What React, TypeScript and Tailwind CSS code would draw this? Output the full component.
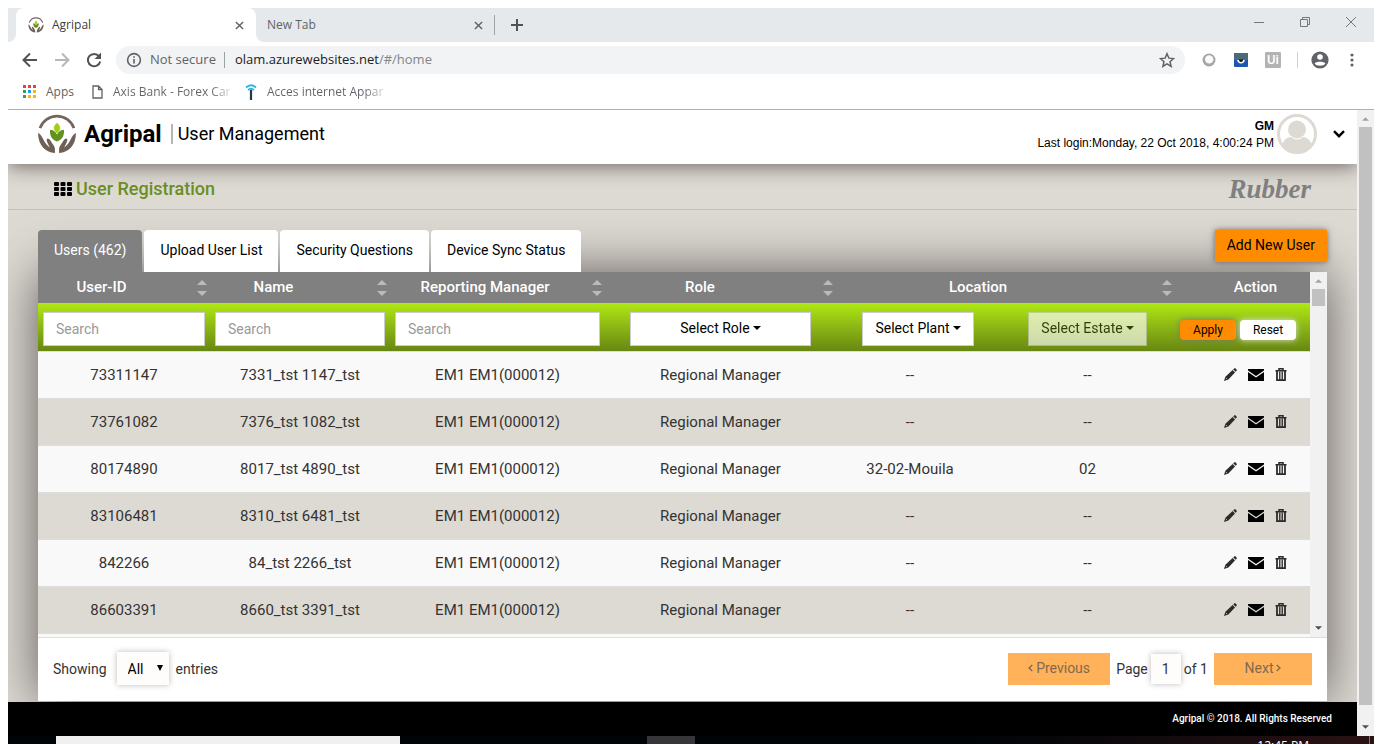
import React from "react";

const users = [
  ["73311147", "7331_tst 1147_tst", "EM1 EM1(000012)", "Regional Manager", "--", "--"],
  ["73761082", "7376_tst 1082_tst", "EM1 EM1(000012)", "Regional Manager", "--", "--"],
  ["80174890", "8017_tst 4890_tst", "EM1 EM1(000012)", "Regional Manager", "32-02-Mouila", "02"],
  ["83106481", "8310_tst 6481_tst", "EM1 EM1(000012)", "Regional Manager", "--", "--"],
  ["842266", "84_tst 2266_tst", "EM1 EM1(000012)", "Regional Manager", "--", "--"],
  ["86603391", "8660_tst 3391_tst", "EM1 EM1(000012)", "Regional Manager", "--", "--"],
];

function Logo({ className }: { className: string }) {
  return (
    <svg viewBox="0 0 110 116" className={className} aria-hidden="true">
      <path d="M6 41A52 52 0 0 1 104 41" fill="none" stroke="#74655d" strokeWidth="8" />
      <path
        d="M0 55C7 57 11 65 16 75C20 84 26 91 34 98C31 89 24 80 25 74C27 69 32 71 36 77C41 86 48 92 49 101V113C20 112 0 88 0 55Z"
        fill="#6e5f57"
      />
      <path
        d="M110 55C103 57 99 65 94 75C90 84 84 91 76 98C79 89 86 80 85 74C83 69 78 71 74 77C69 86 62 92 61 101V113C90 112 110 88 110 55Z"
        fill="#6e5f57"
      />
      <path d="M55 80C40 76 33 62 35 46C46 47 53 51 55 60C57 51 64 47 75 46C77 62 70 76 55 80Z" fill="#64901f" />
      <path d="M55 25C69 36 67 47 55 57C43 47 41 36 55 25Z" fill="#a0ce14" stroke="#fff" strokeWidth="1.5" />
    </svg>
  );
}

function Close({ className }: { className: string }) {
  return (
    <svg viewBox="0 0 10 10" className={className} fill="none" stroke="currentColor" aria-hidden="true">
      <path d="M1 1L9 9M9 1L1 9" strokeWidth="1.6" />
    </svg>
  );
}

function Triangle({ up, className }: { up?: boolean; className: string }) {
  return (
    <svg viewBox="0 0 8 4" className={className} fill="currentColor" aria-hidden="true">
      <path d={up ? "M0 4L4 0L8 4Z" : "M0 0H8L4 4Z"} />
    </svg>
  );
}

function Bookmark({ href, label }: { href: string; label: string }) {
  return (
    <a
      href={href}
      className="ml-[10px] w-[122px] whitespace-nowrap bg-linear-to-r from-[#5f6368] from-80% to-white bg-clip-text text-transparent"
    >
      {label}
    </a>
  );
}

function BrowserChrome() {
  return (
    <div className="shrink-0 border-b border-[#b0b0b2] font-['Open_Sans',sans-serif] text-xs text-[#5f6368]">
      <div className="flex h-[34px] bg-[#e5e9ec]">
        <div className="w-2 bg-white">
          <div className="h-full rounded-br-lg bg-[#e5e9ec]" />
        </div>
        <div className="flex w-60 items-center rounded-t-lg bg-white px-3 text-[#3c4043]">
          <Logo className="h-4 w-4" />
          <span className="ml-2 grow">Agripal</span>
          <button aria-label="Close Agripal" className="text-[#5f6368]">
            <Close className="h-[9px] w-[9px]" />
          </button>
        </div>
        <div className="bg-white">
          <div className="flex h-full w-[238px] items-center rounded-bl-lg bg-[#e5e9ec] pl-[11px] pr-[11px]">
            <span className="grow">New Tab</span>
            <button aria-label="Close New Tab">
              <Close className="h-[9px] w-[9px]" />
            </button>
          </div>
        </div>
        <div className="h-5 w-px self-center bg-[#a0a4a8]" />
        <button aria-label="New tab" className="ml-4">
          <svg viewBox="0 0 12 12" className="h-3 w-3" stroke="#4f5357" strokeWidth="2" aria-hidden="true">
            <path d="M6 0V12M0 6H12" />
          </svg>
        </button>
        <div className="ml-auto flex items-start gap-9 pr-[18px] pt-[9px] text-[#777]">
          <button aria-label="Minimize">
            <svg viewBox="0 0 10 10" className="h-[10px] w-[10px]" stroke="currentColor" aria-hidden="true">
              <path d="M0 5.5H10" />
            </svg>
          </button>
          <button aria-label="Restore">
            <svg viewBox="0 0 10 10" className="h-[10px] w-[10px]" fill="none" stroke="currentColor" aria-hidden="true">
              <path d="M0.5 2.5H7.5V9.5H0.5ZM2.5 2.5V0.5H9.5V7.5H7.5" />
            </svg>
          </button>
          <button aria-label="Close window">
            <svg viewBox="0 0 10 10" className="h-[10px] w-[10px]" stroke="currentColor" aria-hidden="true">
              <path d="M0 0L10 10M10 0L0 10" />
            </svg>
          </button>
        </div>
      </div>

      <div className="mt-1 flex h-7 items-center pl-[14px] pr-5">
        <button aria-label="Back">
          <svg viewBox="0 0 16 16" className="h-4 w-4" fill="none" stroke="#4f5357" strokeWidth="2" aria-hidden="true">
            <path d="M15 8H2M8 1.5L1.5 8L8 14.5" />
          </svg>
        </button>
        <button aria-label="Forward" className="ml-4">
          <svg viewBox="0 0 16 16" className="h-4 w-4" fill="none" stroke="#b5b7b9" strokeWidth="2" aria-hidden="true">
            <path d="M1 8H14M8 1.5L14.5 8L8 14.5" />
          </svg>
        </button>
        <button aria-label="Reload" className="ml-4">
          <svg viewBox="0 0 16 16" className="h-4 w-4" aria-hidden="true">
            <path d="M13 4.2A6.2 6.2 0 1 0 14.2 9.5" fill="none" stroke="#4f5357" strokeWidth="2" />
            <path d="M15 0.5V7H8.5Z" fill="#4f5357" />
          </svg>
        </button>
        <div className="ml-[14px] flex h-7 grow items-center rounded-full bg-[#f1f3f4] px-[10px] text-[13px]">
          <svg viewBox="0 0 16 16" className="h-4 w-4" fill="none" stroke="#5f6368" strokeWidth="1.6" aria-hidden="true">
            <circle cx="8" cy="8" r="6.4" />
            <path d="M8 7V11.5M8 4.2V5.8" />
          </svg>
          <span className="ml-2">Not secure</span>
          <span className="ml-2 h-4 w-px bg-[#9aa0a6]" />
          <span className="ml-[10px] text-[#80868b]">
            <span className="text-[#202124]">olam.azurewebsites.net</span>/#/home
          </span>
          <svg viewBox="0 0 24 24" className="ml-auto h-4 w-4" fill="none" stroke="#5f6368" strokeWidth="2.2" aria-hidden="true">
            <path d="M12 2.5L14.8 9.2L22 9.8L16.5 14.5L18.2 21.6L12 17.8L5.8 21.6L7.5 14.5L2 9.8L9.2 9.2Z" />
          </svg>
        </div>
        <div className="flex items-center pl-[17px]">
          <svg viewBox="0 0 14 14" className="h-[14px] w-[14px]" aria-hidden="true">
            <circle cx="7" cy="7" r="6.5" fill="#a5a5a5" />
            <circle cx="7.2" cy="6.4" r="4.2" fill="#fafafa" />
          </svg>
          <svg viewBox="0 0 14 14" className="ml-[18px] h-[14px] w-[14px]" aria-hidden="true">
            <rect width="14" height="14" rx="1" fill="#1f57b0" />
            <rect width="14" height="7" fill="#4b6b7c" />
            <path d="M3.2 7H10.8Q10.4 10.4 7 10.4T3.2 7Z" fill="#fff" />
            <path d="M4.8 6.5H9.2Q9 9 7 9T4.8 6.5Z" fill="#111" />
          </svg>
          <span className="ml-[17px] flex h-4 w-4 items-center justify-center rounded-[1px] bg-[#b3b3b3] font-['Roboto',sans-serif] text-[13px] font-medium text-white">
            Ui
          </span>
          <span className="ml-4 h-4 w-px bg-[#cfd1d3]" />
          <svg viewBox="0 0 18 18" className="ml-[13px] h-[18px] w-[18px]" aria-hidden="true">
            <circle cx="9" cy="9" r="8.6" fill="#5f6368" />
            <circle cx="9" cy="6" r="2.8" fill="#fff" />
            <path d="M3.6 12.6C4.8 10.2 13.2 10.2 14.4 12.6C12.5 15.6 5.5 15.6 3.6 12.6Z" fill="#fff" />
          </svg>
          <svg viewBox="0 0 4 14" className="ml-[21px] h-[14px] w-1" fill="#5f6368" aria-hidden="true">
            <circle cx="2" cy="2" r="1.6" />
            <circle cx="2" cy="7" r="1.6" />
            <circle cx="2" cy="12" r="1.6" />
          </svg>
        </div>
      </div>

      <div className="flex h-[35px] items-center pl-[15px]">
        <svg viewBox="0 0 13 13" className="h-[13px] w-[13px]" aria-hidden="true">
          <path d="M0 0H3V3H0ZM5 0H8V3H5ZM10 0H13V3H10Z" fill="#ea4335" />
          <path d="M0 5H3V8H0ZM0 10H3V13H0Z" fill="#2fa35b" />
          <path d="M5 5H8V8H5Z" fill="#2196f3" />
          <path d="M10 5H13V8H10ZM5 10H8V13H5ZM10 10H13V13H10Z" fill="#fbb40c" />
        </svg>
        <a href="#apps" className="ml-[10px]">Apps</a>
        <svg viewBox="0 0 11 14" className="ml-[18px] h-[14px] w-[11px]" fill="none" stroke="#5f6368" strokeWidth="1.3" aria-hidden="true">
          <path d="M1 1H6.5L10 4.5V13H1ZM6.5 1V4.5H10" />
        </svg>
        <Bookmark href="#axis" label="Axis Bank - Forex Car" />
        <svg viewBox="0 0 12 16" className="ml-[10px] h-4 w-3" fill="none" aria-hidden="true">
          <path d="M1 3.5Q6 -1 11 3.5M3 6Q6 3.4 9 6" stroke="#29b6e8" strokeWidth="1.8" />
          <path d="M6 6V16" stroke="#1f3a4a" strokeWidth="2.2" />
        </svg>
        <Bookmark href="#acces" label="Acces internet Appar" />
      </div>
    </div>
  );
}

function SiteHeader() {
  return (
    <header className="relative z-10 flex h-[54px] shrink-0 items-center bg-white pb-[6px] pl-[30px] pr-3 text-black shadow-[0_2px_20px_#6b6360]">
      <Logo className="h-10 w-[38px]" />
      <span className="ml-2 text-2xl font-bold">Agripal</span>
      <span className="ml-[9px] h-5 w-[2px] bg-[#b5b5b5]" />
      <h1 className="ml-[5px] text-lg">User Management</h1>
      <div className="ml-auto pt-[2px] text-right font-['Liberation_Sans',sans-serif] text-xs leading-[17px]">
        <div className="font-bold">GM</div>
        <div>Last login:Monday, 22 Oct 2018, 4:00:24 PM</div>
      </div>
      <svg viewBox="0 0 40 40" className="ml-[3px] h-10 w-10" aria-hidden="true">
        <circle cx="20" cy="20" r="18.5" fill="#fff" stroke="#dddad3" strokeWidth="3" />
        <circle cx="20" cy="15.5" r="9" fill="#dddad3" />
        <path d="M5 31C7 25 11 23 14 23Q20 28 26 23C29 23 33 25 35 31Q29 39 20 39T5 31Z" fill="#dddad3" />
      </svg>
      <button aria-label="Account menu" className="ml-4">
        <svg viewBox="0 0 12 8" className="h-2 w-3" fill="none" stroke="#000" strokeWidth="2.4" aria-hidden="true">
          <path d="M1 1.2L6 6.2L11 1.2" />
        </svg>
      </button>
    </header>
  );
}

function Sort() {
  return (
    <span className="absolute right-[3px] top-2 flex flex-col gap-[6px] text-[#bdb9b9]">
      <Triangle up className="h-[5px] w-[10px]" />
      <Triangle className="h-[5px] w-[10px]" />
    </span>
  );
}

function Filter({ label, className }: { label: string; className: string }) {
  return (
    <button className={"flex h-[34px] items-center justify-center gap-[3px] border border-[#ccc] bg-white pb-[2px] text-sm text-black " + className}>
      {label}
      <Triangle className="h-1 w-2" />
    </button>
  );
}

function Actions() {
  return (
    <div className="flex items-center justify-center pb-px pl-[26px] text-[#2b2b2b]">
      <button aria-label="Edit">
        <svg viewBox="0 0 13 13" className="h-[13px] w-[13px]" fill="currentColor" aria-hidden="true">
          <path d="M9.2 1.4L10.2 0.4Q10.9 -0.2 11.6 0.5L12.5 1.4Q13.2 2.1 12.6 2.8L11.6 3.8Z" />
          <path d="M8.6 2L11 4.4L4.4 11.4L0 13L1.4 8.8Z" />
          <path d="M8.6 1.2L11.8 4.4" stroke="#aaa" strokeWidth="0.5" />
          <path d="M1.9 10L3 11.1" stroke="#ddd" strokeWidth="0.8" />
        </svg>
      </button>
      <button aria-label="Send mail" className="ml-[11px]">
        <svg viewBox="0 0 16 12" className="h-3 w-4" fill="#000" aria-hidden="true">
          <path d="M0 0H16V1.4L8 7L0 1.4ZM0 3L8 8.6L16 3V12H0Z" />
        </svg>
      </button>
      <button aria-label="Delete" className="ml-[11px]">
        <svg viewBox="0 0 12 13" className="h-[13px] w-3" fill="none" stroke="currentColor" aria-hidden="true">
          <path d="M0.5 2.7H11.5M4 2.5V0.7H8V2.5" strokeWidth="1.5" />
          <path d="M2 3V12.2H10V3" strokeWidth="1.8" />
          <path d="M4.5 3.5V12M6 3.5V12M7.5 3.5V12" strokeWidth="0.9" />
        </svg>
      </button>
    </div>
  );
}

function UserTable() {
  const field =
    "block h-[34px] w-full border border-[#ccc] bg-white px-3 text-sm font-normal text-black placeholder:text-[#999]";
  return (
    <table className="w-full table-fixed border-collapse text-center text-[15px] text-[#333]">
      <colgroup>
        <col className="w-[172px]" />
        <col className="w-[180px]" />
        <col className="w-[215px]" />
        <col className="w-[231px]" />
        <col className="w-[148px]" />
        <col className="w-[191px]" />
        <col className="w-[135px]" />
      </colgroup>
      <thead>
        <tr className="h-[31px] bg-[#808080] text-white [&>th]:relative [&>th]:font-medium">
          <th className="pr-[45px]">User-ID<Sort /></th>
          <th className="pr-[53px]">Name<Sort /></th>
          <th className="pr-[25px]">Reporting Manager<Sort /></th>
          <th className="pr-[41px]">Role<Sort /></th>
          <th className="pr-[55px]" colSpan={2}>Location<Sort /></th>
          <th className="pl-[26px]">Action</th>
        </tr>
        <tr className="h-12 bg-linear-to-b from-[#b0e913] to-[#678512] [&>td]:px-[5px] [&>td]:pt-[9px] [&>td]:pb-[5px]">
          <td><input aria-label="Search User-ID" placeholder="Search" className={field} /></td>
          <td><input aria-label="Search Name" placeholder="Search" className={field} /></td>
          <td><input aria-label="Search Reporting Manager" placeholder="Search" className={field} /></td>
          <td><Filter label="Select Role" className="mx-5 w-[181px]" /></td>
          <td><Filter label="Select Plant" className="ml-[21px] w-28" /></td>
          <td><Filter label="Select Estate" className="ml-[39px] w-[119px] opacity-65" /></td>
          <td>
            <div className="mt-[2px] flex gap-1 text-xs text-black">
              <button className="h-5 w-14 rounded bg-[#ff8c00] shadow-[0_0_6px_#777]">Apply</button>
              <button className="h-5 w-14 rounded bg-white shadow-[0_0_6px_#ddd]">Reset</button>
            </div>
          </td>
        </tr>
      </thead>
      <tbody>
        {users.map((user) => (
          <tr key={user[0]} className="h-[47px] border-t border-[#ddd] odd:bg-[#f9f9f9] even:bg-[#dddad3]">
            {user.map((value, i) => (
              <td key={i} className={i === 5 ? "pl-4" : ""}>{value}</td>
            ))}
            <td><Actions /></td>
          </tr>
        ))}
        <tr className="h-[47px] border-t border-[#ddd] bg-[#f9f9f9]">
          <td colSpan={7} />
        </tr>
      </tbody>
    </table>
  );
}

function TableFooter() {
  return (
    <div className="flex h-[63px] shrink-0 items-center bg-white px-[15px] pb-[2px] text-sm text-[#333]">
      <label className="flex items-center">
        Showing
        <span className="relative ml-[10px] mr-[7px]">
          <select className="h-[33px] w-[52px] appearance-none bg-[#fefdfc] pl-[11px] text-black shadow-[0_0_6px_#bbb]">
            <option>All</option>
          </select>
          <svg viewBox="0 0 6 6" className="pointer-events-none absolute right-[6px] top-[13px] h-[6px] w-[6px]" aria-hidden="true">
            <path d="M0 0H6L3 6Z" />
          </svg>
        </span>
        entries
      </label>
      <div className="ml-auto flex items-center">
        <button className="flex h-8 w-[102px] items-center justify-center gap-[3px] bg-[#ffb259] pb-[2px] text-[#7e6a50]">
          <svg viewBox="0 0 5 8" className="h-2 w-[5px]" fill="none" stroke="currentColor" strokeWidth="1.3" aria-hidden="true">
            <path d="M4.3 1L1 4L4.3 7" />
          </svg>
          Previous
        </button>
        <label htmlFor="page" className="ml-[6px]">Page</label>
        <input id="page" defaultValue="1" className="ml-[3px] h-[30px] w-[30px] bg-[#fefdfc] text-center shadow-[0_0_6px_#bbb]" />
        <span className="ml-[3px]">of 1</span>
        <button className="ml-[6px] flex h-8 w-[98px] items-center justify-center gap-[3px] bg-[#ffb259] pb-[2px] text-[#7e6a50]">
          Next
          <svg viewBox="0 0 5 8" className="h-2 w-[5px]" fill="none" stroke="currentColor" strokeWidth="1.3" aria-hidden="true">
            <path d="M0.7 1L4 4L0.7 7" />
          </svg>
        </button>
      </div>
    </div>
  );
}

export default function App() {
  const tab = "rounded-t px-4 pb-[2px] text-sm";
  return (
    <div className="flex h-screen flex-col overflow-hidden bg-white px-2 pt-2 font-['Roboto',sans-serif]">
      <BrowserChrome />
      <div className="flex min-h-0 grow">
        <div className="flex min-w-0 grow flex-col overflow-hidden bg-[#dddad3]">
          <SiteHeader />
          <div className="flex h-[46px] shrink-0 items-center justify-between border-b border-[#c4c2be] px-[46px] pt-1">
            <h2 className="flex items-center gap-1 text-lg font-medium text-[#6b8e23]">
              <svg viewBox="0 0 18 14" className="h-[14px] w-[18px]" fill="#000" aria-hidden="true">
                <rect x="0" y="0" width="5" height="4" rx="1" />
                <rect x="6.5" y="0" width="5" height="4" rx="1" />
                <rect x="13" y="0" width="5" height="4" rx="1" />
                <rect x="0" y="5" width="5" height="4" rx="1" />
                <rect x="6.5" y="5" width="5" height="4" rx="1" />
                <rect x="13" y="5" width="5" height="4" rx="1" />
                <rect x="0" y="10" width="5" height="4" rx="1" />
                <rect x="6.5" y="10" width="5" height="4" rx="1" />
                <rect x="13" y="10" width="5" height="4" rx="1" />
              </svg>
              User Registration
            </h2>
            <span className="pt-[2px] font-['Liberation_Serif',serif] text-[27px] font-bold italic text-[#808080]">Rubber</span>
          </div>
          <main className="flex min-h-0 grow flex-col overflow-hidden px-[30px] pb-px pt-5">
            <div className="relative z-10 flex h-[42px] shrink-0 gap-[2px]">
              <button className={tab + " bg-[#808080] text-white"}>Users (462)</button>
              <button className={tab + " bg-white text-black"}>Upload User List</button>
              <button className={tab + " bg-white text-black"}>Security Questions</button>
              <button className={tab + " bg-white text-black"}>Device Sync Status</button>
              <button className="ml-auto h-8 bg-[#ff8c00] px-3 pb-[2px] text-sm text-black shadow-[0_0_6px_#666]">Add New User</button>
            </div>
            <section className="flex min-h-0 grow flex-col shadow-[0_0_50px_#5f5858]">
              <div className="flex min-h-0 grow overflow-hidden border-b border-[#ddd] bg-white">
                <div className="min-w-0 grow overflow-hidden">
                  <UserTable />
                </div>
                <div className="flex w-[17px] shrink-0 flex-col items-center justify-between bg-[#f1f1f1] py-[7px]">
                  <div className="flex flex-col items-center gap-[6px]">
                    <Triangle up className="h-1 w-[7px] text-[#a3a3a3]" />
                    <div className="h-[17px] w-[13px] bg-[#c1c1c1]" />
                  </div>
                  <Triangle className="h-1 w-[7px] text-[#505050]" />
                </div>
              </div>
              <TableFooter />
            </section>
          </main>
          <footer className="flex h-[34px] shrink-0 items-center justify-end bg-black pb-[2px] pr-[25px] text-[10px] font-medium text-white">
            Agripal © 2018. All Rights Reserved
          </footer>
        </div>
        <div className="flex w-[17px] shrink-0 flex-col items-center bg-[#f1f1f1] py-[7px]">
          <Triangle up className="h-1 w-[7px] shrink-0 text-[#a3a3a3]" />
          <div className="mb-5 mt-[6px] w-[13px] grow bg-[#c1c1c1]" />
          <Triangle className="h-1 w-[7px] shrink-0 text-[#505050]" />
        </div>
      </div>
      <div className="flex h-2 shrink-0 overflow-hidden bg-linear-to-r from-[#010407] from-70% to-[#2a1214] pl-12">
        <div className="w-[344px] bg-[#f0f0f0]" />
        <div className="ml-[247px] w-12 bg-[#363638]" />
        <div className="ml-auto mr-1 border-r border-[#777] pr-[60px] pt-1 font-['Open_Sans',sans-serif] text-xs leading-3 text-white">
          12:45 PM
        </div>
      </div>
    </div>
  );
}
